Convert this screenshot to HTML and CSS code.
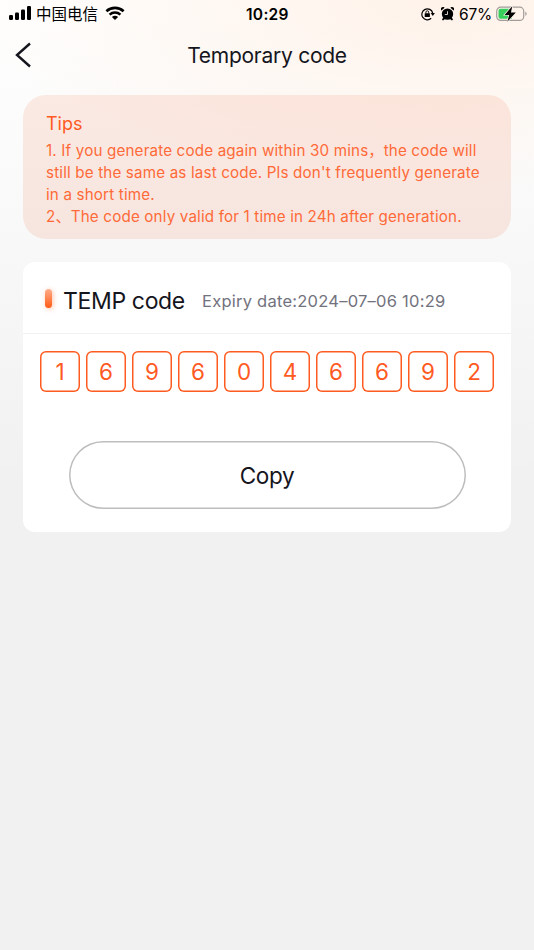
FILE: index.html
```html
<!DOCTYPE html>
<html lang="en">
<head>
<meta charset="utf-8">
<meta name="viewport" content="width=device-width, initial-scale=1">
<title>Temporary code</title>
<link rel="stylesheet" href="styles.css">
</head>
<body>
<div class="statusbar">
  <div class="status-left">
    <svg class="signal" width="23" height="14" viewBox="0 0 23 14">
      <rect x="0" y="9" width="4" height="5" rx="1.2"/>
      <rect x="6" y="6.5" width="4" height="7.5" rx="1.2"/>
      <rect x="12" y="3.5" width="4" height="10.5" rx="1.2"/>
      <rect x="18" y="0" width="4" height="14" rx="1.2"/>
    </svg>
    <span class="carrier">中国电信</span>
    <svg class="wifi" width="20" height="14" viewBox="0 0 20 14">
      <path d="M1.4 5.2C6.2.7 13.8.7 18.6 5.2" fill="none" stroke="#000" stroke-width="2.6"/>
      <path d="M4.6 8.6C7.6 5.8 12.4 5.8 15.4 8.6" fill="none" stroke="#000" stroke-width="2.5"/>
      <path d="M10 14L6.9 11C8.6 9.4 11.4 9.4 13.1 11Z"/>
    </svg>
  </div>
  <span class="clock">10:29</span>
  <div class="status-right">
    <svg width="14" height="14" viewBox="0 0 14 14">
      <path d="M10.2 11.3A5.5 5.5 0 1 1 11.7 6" fill="none" stroke="#000" stroke-width="1.2"/>
      <path d="M9.7 6h4.2l-2.1 3z"/>
      <rect x="3.7" y="6.3" width="5.2" height="3.7" rx=".5"/>
      <path d="M4.9 6.5V5.2a1.4 1.4 0 0 1 2.8 0v1.3" fill="none" stroke="#000" stroke-width=".9"/>
    </svg>
    <svg width="13" height="14" viewBox="0 0 13 14">
      <circle cx="6.5" cy="7.1" r="5.7"/>
      <path d="M.4 3.6A2 2 0 0 1 3.6.8zM12.6 3.6A2 2 0 0 0 9.400.8zM2.200 10.300l-1.200 2.500 1.100.7 2.200-1.700zM10.800 10.300l1.200 2.500-1.100.7-2.200-1.700z"/>
      <path d="M6.500 4.200V7.500H3.800" fill="none" stroke="#fff4ec" stroke-width=".8"/>
    </svg>
    <span class="percent">67%</span>
    <svg class="battery" width="32" height="16" viewBox="0 0 32 16">
      <rect x=".7" y="1.2" width="27" height="13.2" rx="4" fill="none" stroke="#a19c99" stroke-width="1.2"/>
      <path d="M29.3 5.5v4.6a2.6 2.6 0 0 0 0-4.6" fill="#a19c99"/>
      <path d="M4.5 2.8H16v10H4.500a2 2 0 0 1-2-2v-6a2 2 0 0 1 2-2z" fill="#37cf5c"/>
      <path d="M16.300 .3L8.600 8.900h4.600L11.300 15.700 19.800 6.600H14.900z" fill="#000" stroke="#fff4ec" stroke-width="1.400" paint-order="stroke"/>
    </svg>
  </div>
</div>
<header class="navbar">
  <svg class="back" width="17" height="26" viewBox="0 0 17 26"><path d="M15 1.5L2 13 15 24.5" fill="none" stroke="#15151d" stroke-width="2.4"/></svg>
  <h1>Temporary code</h1>
</header>
<main>
  <section class="tips">
    <h2>Tips</h2>
    <p>1. If you generate code again within 30 mins，the code will</p>
    <p>still be the same as last code. Pls don't frequently generate</p>
    <p>in a short time.</p>
    <p>2、The code only valid for 1 time in 24h after generation.</p>
  </section>
  <section class="card">
    <div class="card-head">
      <i class="marker"></i>
      <h2>TEMP code</h2>
      <span class="expiry">Expiry date:2024–07–06 10:29</span>
    </div>
    <div class="digits">
      <span>1</span><span>6</span><span>9</span><span>6</span><span>0</span><span>4</span><span>6</span><span>6</span><span>9</span><span>2</span>
    </div>
    <button class="copy">Copy</button>
  </section>
</main>
</body>
</html>
```
FILE: styles.css
```css
* { box-sizing: border-box; }
body {
  margin: 0;
  height: 950px;
  overflow: hidden;
  font-family: Inter, "Noto Sans CJK SC", sans-serif;
  color: #15151d;
  background:
    radial-gradient(ellipse 460px 200px at 84% 0, rgba(255, 241, 231, .9), rgba(255, 246, 238, 0)),
    linear-gradient(#fffefd 0, #fbfbfb 150px, #f7f7f7 280px, #f1f1f1 480px, #f1f1f1 100%);
}
h1, h2, p { margin: 0; font-weight: 400; white-space: nowrap; }
svg { display: block; flex: none; }
.statusbar {
  height: 28px;
  padding: 0 6px 0 9px;
  display: grid;
  grid-template-columns: 1fr 43px 1fr;
  align-items: center;
  color: #000;
}
.status-left, .status-right { display: flex; align-items: center; }
.status-right { justify-content: flex-end; gap: 6px; margin-top: -1px; }
.signal { margin-top: -2px; }
.wifi { margin-top: -2px; }
.carrier { font: 15.5px/26px "Noto Sans CJK SC", sans-serif; margin: -2px 7px 0 4px; }
.clock { font-size: 15.5px; font-weight: 600; letter-spacing: .3px; margin-left: -1px; }
.percent { font-size: 15.5px; letter-spacing: -.2px; margin: 1px -2px 0 -1px; }
.navbar {
  height: 54px;
  display: grid;
  grid-template-columns: 32px 1fr 32px;
  align-items: center;
}
.back { margin-left: 15px; }
h1 { font-size: 21px; text-align: center; letter-spacing: -.27px; }
main { padding: 13px 23px 0; }
.tips {
  height: 144px;
  padding: 15px 0 0 23px;
  border-radius: 23px;
  background: rgba(240, 85, 30, .11);
  color: #ff6a38;
  font-size: 15.2px;
  line-height: 22px;
  letter-spacing: .16px;
}
.tips h2 { font-size: 18px; line-height: 27px; letter-spacing: 0; color: #ff5a1f; margin-bottom: 2px; }
.tips p { position: relative; top: 1px; }
.card { height: 270px; margin-top: 23px; border-radius: 12px; background: #fff; }
.card-head {
  height: 72px;
  padding: 6px 0 0 22px;
  border-bottom: 1px solid #f1f1f1;
  display: flex;
  align-items: center;
}
.marker {
  width: 7px;
  height: 19px;
  margin: -4px 11px 0 0;
  border-radius: 4px;
  background: linear-gradient(#ffae8c, #ff5a14);
  box-shadow: 1px 1px 5px rgba(255, 90, 20, .35);
}
.card-head h2 { width: 122px; font-size: 23px; letter-spacing: -.35px; }
.expiry { margin-left: 17px; font-size: 16.5px; letter-spacing: .24px; color: #72727e; white-space: nowrap; }
.digits { display: flex; gap: 6px; padding: 17px 17px 0; }
.digits span {
  width: 40px;
  height: 41px;
  box-shadow: inset 0 0 0 1.5px #ff5a1f;
  border-radius: 6px;
  color: #ff5a1f;
  font-size: 22.5px;
  line-height: 42px;
  text-align: center;
}
.copy {
  display: block;
  width: 397px;
  height: 68px;
  margin: 49px auto 0;
  padding: 0;
  border: 0;
  box-shadow: inset 0 0 0 1.5px #bdbdbd;
  border-radius: 34px;
  background: none;
  font: 22.5px Inter, sans-serif;
  letter-spacing: -.35px;
  color: #15151d;
}
```
